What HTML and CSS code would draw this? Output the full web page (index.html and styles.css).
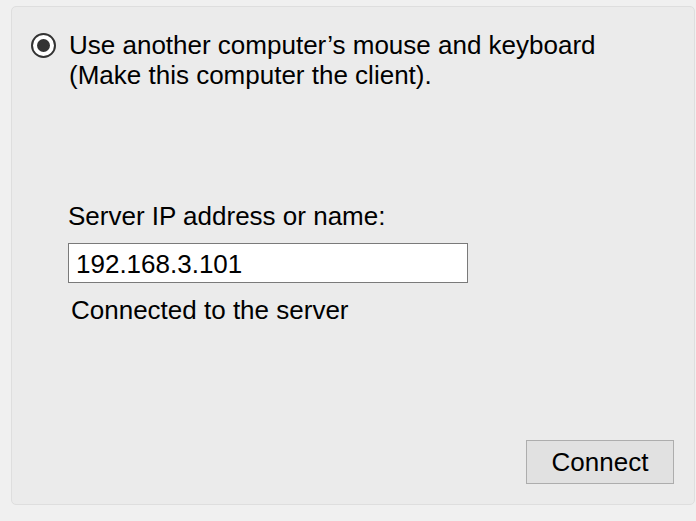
FILE: index.html
```html
<!DOCTYPE html>
<html>
<head>
<meta charset="utf-8">
<link rel="stylesheet" href="styles.css">
</head>
<body>
<div class="panel">
  <div class="option">
    <span class="radio"><span class="dot"></span></span>
    <div class="option-text">Use another computer’s mouse and keyboard<br>(Make this computer the client).</div>
  </div>
  <div class="form">
    <div class="label">Server IP address or name:</div>
    <input class="field" type="text" value="192.168.3.101">
    <div class="status">Connected to the server</div>
  </div>
  <div class="actions">
    <button class="btn">Connect</button>
  </div>
</div>
</body>
</html>
```
FILE: styles.css
```css
html, body {
  margin: 0;
  padding: 0;
  background: #f0f0f0;
  width: 696px;
  height: 521px;
  overflow: hidden;
  font-family: "Liberation Sans", Arial, sans-serif;
  font-size: 26px;
  color: #000;
}
.panel {
  box-sizing: border-box;
  margin: 6px 1px 0 11px;
  width: 684px;
  height: 499px;
  background: #ebebeb;
  border: 1px solid #dedede;
  border-radius: 5px;
  display: flex;
  flex-direction: column;
  padding: 23px 20px 20px 19px;
}
.option {
  display: flex;
  align-items: flex-start;
  gap: 13px;
  line-height: 30px;
}
.radio {
  box-sizing: border-box;
  flex: none;
  width: 25px;
  height: 25px;
  margin-top: 3px;
  border: 2px solid #333;
  border-radius: 50%;
  background: #fff;
  display: flex;
  align-items: center;
  justify-content: center;
}
.dot {
  width: 13px;
  height: 13px;
  border-radius: 50%;
  background: #333;
}
.form {
  margin-top: 111px;
  padding-left: 37px;
  display: flex;
  flex-direction: column;
  align-items: flex-start;
  line-height: 30px;
}
.field {
  box-sizing: border-box;
  margin-top: 12px;
  width: 400px;
  height: 40px;
  border: 1px solid #7a7a7a;
  background: #fff;
  padding: 2px 7px 0;
  font-family: "Liberation Sans", Arial, sans-serif;
  font-size: 26px;
  color: #000;
  outline: none;
}
.status {
  margin-top: 12px;
  padding-left: 3px;
}
.actions {
  margin-top: auto;
  display: flex;
  justify-content: flex-end;
}
.btn {
  box-sizing: border-box;
  width: 148px;
  height: 44px;
  background: #e1e1e1;
  border: 1px solid #adadad;
  border-radius: 0;
  font-family: "Liberation Sans", Arial, sans-serif;
  font-size: 26px;
  color: #000;
  padding: 0;
}
```
